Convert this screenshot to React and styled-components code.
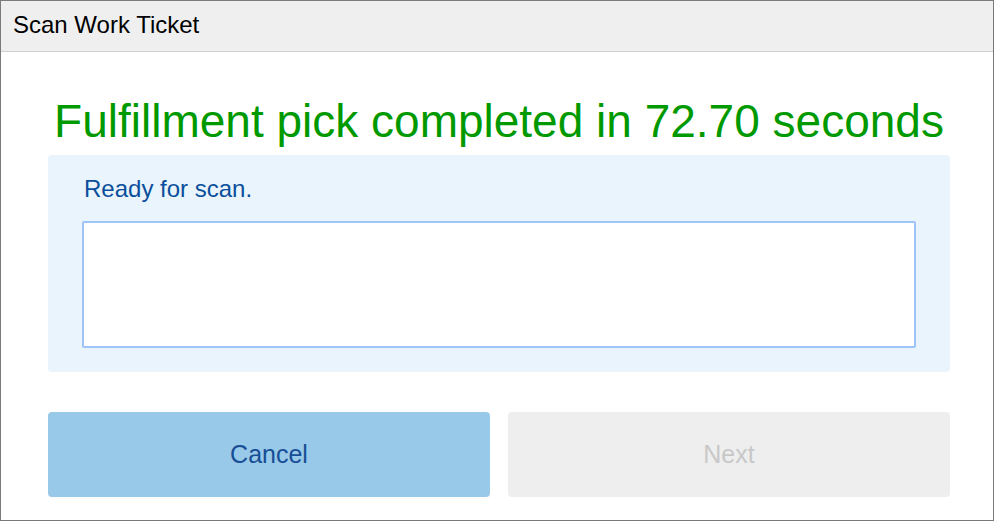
import React, { useState } from "react";
import styled, { createGlobalStyle } from "styled-components";

const GlobalStyle = createGlobalStyle`
  html, body {
    margin: 0;
    padding: 0;
    background: #ffffff;
  }
  body {
    font-family: "Liberation Sans", Arial, sans-serif;
  }
`;

const ScanWorkTicket = () => {
  const [code, setCode] = useState("");
  const seconds = 72.7;
  return (
    <Window>
      <TitleBar>Scan Work Ticket</TitleBar>
      <Body>
        <Headline>Fulfillment pick completed in {seconds.toFixed(2)} seconds</Headline>
        <ScanPanel>
          <Status>Ready for scan.</Status>
          <ScanInput value={code} onChange={(e) => setCode(e.target.value)} />
        </ScanPanel>
        <Actions>
          <Button variant="primary">Cancel</Button>
          <Button variant="disabled" disabled>
            Next
          </Button>
        </Actions>
      </Body>
    </Window>
  );
};

const Window = styled.div`
  box-sizing: border-box;
  width: 994px;
  height: 521px;
  border: 1px solid #7a7a7a;
  display: flex;
  flex-direction: column;
  background: #ffffff;
`;

const TitleBar = styled.div`
  height: 51px;
  flex-shrink: 0;
  box-sizing: border-box;
  padding: 10px 0 0 12px;
  background: #efefef;
  border-bottom: 1px solid #d0d0d0;
  font-size: 24px;
  line-height: 28px;
  color: #000000;
`;

const Body = styled.div`
  flex: 1;
  display: flex;
  flex-direction: column;
  padding: 0 43px 0 47px;
`;

const Headline = styled.h1`
  margin: 44px 0 0;
  height: 59px;
  font-size: 46px;
  font-weight: normal;
  line-height: 50px;
  text-align: center;
  color: #009900;
  white-space: nowrap;
`;

const ScanPanel = styled.div`
  height: 217px;
  box-sizing: border-box;
  padding: 22px 34px 24px 34px;
  background: #eaf4fd;
  border-radius: 4px;
  display: flex;
  flex-direction: column;
`;

const Status = styled.div`
  font-size: 24px;
  color: #0b4f9c;
  line-height: 24px;
  margin-left: 2px;
  margin-bottom: 20px;
`;

const ScanInput = styled.textarea`
  box-sizing: border-box;
  height: 127px;
  width: 100%;
  border: 2px solid #a0c4f8;
  border-radius: 2px;
  background: #ffffff;
  resize: none;
  outline: none;
  font-family: inherit;
  font-size: 20px;
`;

const Actions = styled.div`
  display: grid;
  grid-template-columns: 1fr 1fr;
  gap: 18px;
  margin-top: 40px;
`;

const Button = styled.button`
  height: 85px;
  border: none;
  border-radius: 4px;
  font-family: inherit;
  font-size: 25px;
  background: ${(p) => (p.variant === "primary" ? "#99c9e8" : "#eeeeee")};
  color: ${(p) => (p.variant === "primary" ? "#174e96" : "#c8c8c8")};
  cursor: ${(p) => (p.variant === "primary" ? "pointer" : "default")};
`;

const App = () => (
  <>
    <GlobalStyle />
    <ScanWorkTicket />
  </>
);

export default App;
